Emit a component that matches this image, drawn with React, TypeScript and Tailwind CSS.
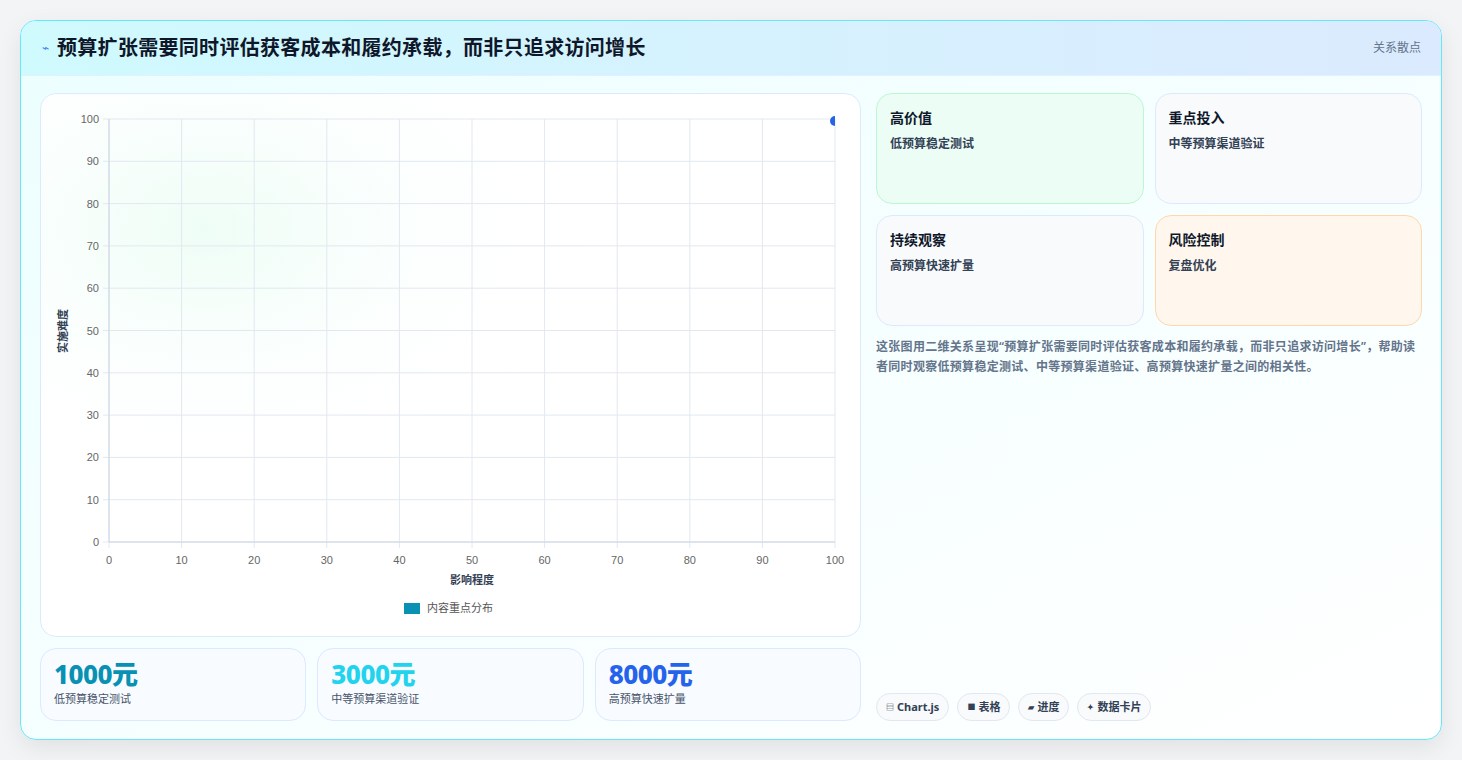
import React from "react";

const F = { fontFamily: '"Noto Sans", "Noto Sans CJK SC", sans-serif' };

function Chart() {
  const x0 = 68, x1 = 794, y0 = 25, y1 = 448;
  const ticks = [0, 10, 20, 30, 40, 50, 60, 70, 80, 90, 100];
  const X = (v: number) => x0 + ((x1 - x0) * v) / 100;
  const Y = (v: number) => y1 - ((y1 - y0) * v) / 100;
  return (
    <svg width="820" height="543" className="block" style={{ fontFamily: '"Liberation Sans", "Noto Sans CJK SC", sans-serif' }}>
      <defs>
        <radialGradient id="g" cx="0.2" cy="0.25" r="0.5">
          <stop offset="0" stopColor="#ecfdf5" stopOpacity="0.9" />
          <stop offset="1" stopColor="#ffffff" stopOpacity="0" />
        </radialGradient>
        <clipPath id="c"><rect x={x0} y={y0 - 6} width={x1 - x0} height={y1 - y0 + 6} /></clipPath>
      </defs>
      <rect x="0" y="0" width="820" height="543" fill="url(#g)" />
      {ticks.map((t) => (
        <g key={t}>
          <line x1={X(t)} x2={X(t)} y1={y0} y2={y1 + 6} stroke="#e2e8f0" />
          <line x1={x0 - 6} x2={x1} y1={Y(t)} y2={Y(t)} stroke="#e2e8f0" />
          <text x={X(t)} y={y1 + 22} fontSize="11" fill="#666" textAnchor="middle">{t}</text>
          <text x={x0 - 10} y={Y(t) + 4} fontSize="11" fill="#666" textAnchor="end">{t}</text>
        </g>
      ))}
      <line x1={x0} x2={x1} y1={y1} y2={y1} stroke="#cbd5e1" />
      <line x1={x0} x2={x0} y1={y0} y2={y1} stroke="#cbd5e1" />
      <circle cx={x1} cy={y0 + 2} r="5" fill="#2563eb" clipPath="url(#c)" />
      <text x="431" y="490" fontSize="11" fontWeight="bold" fill="#334155" textAnchor="middle">影响程度</text>
      <text transform="translate(26 237) rotate(-90)" fontSize="11" fontWeight="bold" fill="#334155" textAnchor="middle">实施难度</text>
      <rect x="363" y="509" width="16" height="11" fill="#0891b2" />
      <text x="386" y="518" fontSize="11" fill="#555">内容重点分布</text>
    </svg>
  );
}

const quads = [
  { t: "高价值", s: "低预算稳定测试", c: "bg-[#ecfdf5] border-[#bbf7d0]" },
  { t: "重点投入", s: "中等预算渠道验证", c: "bg-[#f8fafc] border-[#dbeafe]" },
  { t: "持续观察", s: "高预算快速扩量", c: "bg-[#f8fafc] border-[#dbeafe]" },
  { t: "风险控制", s: "复盘优化", c: "bg-[#fff7ed] border-[#fed7aa]" },
];

const stats = [
  { v: "1000元", s: "低预算稳定测试", c: "text-[#0891b2]" },
  { v: "3000元", s: "中等预算渠道验证", c: "text-[#22d3ee]" },
  { v: "8000元", s: "高预算快速扩量", c: "text-[#2563eb]" },
];

const pills = [
  { i: "▤", t: "Chart.js" },
  { i: "■", t: "表格" },
  { i: "▰", t: "进度" },
  { i: "✦", t: "数据卡片" },
];

export default function App() {
  return (
    <div className="w-[1462px] h-[760px] bg-[#f3f4f6] pt-5 pl-5" style={F}>
      <div className="w-[1422px] h-[720px] rounded-2xl border border-[#67e8f9] overflow-hidden flex flex-col bg-gradient-to-br from-[#ecfeff] to-white shadow-[0_8px_24px_rgba(0,0,0,0.08)]">
        <div className="h-[55px] shrink-0 flex items-center justify-between pl-[21px] pr-5 bg-gradient-to-r from-[#cffafe] to-[#dbeafe] border-b border-[#e0f2fe]">
          <div className="flex items-center gap-[8px]">
            <span className="text-[#3b82f6] text-[12px]">⌁</span>
            <span className="text-[20px] tracking-[0.3px] font-bold text-[#0f172a]">预算扩张需要同时评估获客成本和履约承载，而非只追求访问增长</span>
          </div>
          <span className="text-[12px] text-[#64748b]">关系散点</span>
        </div>
        <div className="flex-1 flex gap-[15px] px-[19px] pt-[17px] pb-[18px]">
          <div className="w-[821px] flex flex-col gap-[11px]">
            <div className="h-[544px] rounded-2xl border border-[#dbeafe] bg-white overflow-hidden">
              <Chart />
            </div>
            <div className="flex gap-[11px]">
              {stats.map((s) => (
                <div key={s.v} className="flex-1 h-[73px] rounded-2xl border border-[#dbeafe] bg-[#f8fbff] px-[13px] pt-[10px]">
                  <div className={`text-[26px] leading-[30px] font-extrabold tracking-[-0.5px] ${s.c}`}>{s.v}</div>
                  <div className="text-[11px] text-[#475569] mt-[2px]">{s.s}</div>
                </div>
              ))}
            </div>
          </div>
          <div className="flex-1 flex flex-col">
            <div className="grid grid-cols-2 gap-[11px]">
              {quads.map((q) => (
                <div key={q.t} className={`h-[111px] rounded-2xl border ${q.c} px-[13px] pt-[13px]`}>
                  <div className="text-[14px] font-bold text-[#0f172a]">{q.t}</div>
                  <div className="text-[12px] font-semibold text-[#334155] mt-[7px]">{q.s}</div>
                </div>
              ))}
            </div>
            <p className="mt-[11px] text-[12px] tracking-[0.3px] leading-[20px] font-semibold text-[#64748b]">
              这张图用二维关系呈现“预算扩张需要同时评估获客成本和履约承载，而非只追求访问增长”，帮助读者同时观察低预算稳定测试、中等预算渠道验证、高预算快速扩量之间的相关性。
            </p>
            <div className="mt-auto flex gap-[8px]">
              {pills.map((p) => (
                <div key={p.t} className="h-[28px] px-[9px] rounded-full border border-[#e2e8f0] bg-[#f8fafc] flex items-center gap-[3px] text-[11px] font-bold text-[#334155]">
                  <span className="text-[8px]">{p.i}</span>
                  <span>{p.t}</span>
                </div>
              ))}
            </div>
          </div>
        </div>
      </div>
    </div>
  );
}
